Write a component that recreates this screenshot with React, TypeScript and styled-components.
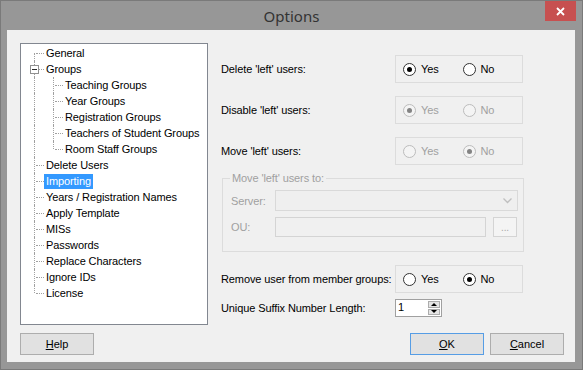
import React from "react";
import styled, { createGlobalStyle, css } from "styled-components";

const GlobalStyle = createGlobalStyle`
  html, body { margin: 0; padding: 0; background: #979797; }
  * { box-sizing: border-box; }
`;

const Window = styled.div`
  width: 583px;
  height: 370px;
  border: 1px solid #7a7a7a;
  background: #979797;
  display: flex;
  flex-direction: column;
  font-family: "Liberation Sans", Arial, sans-serif;
  font-size: 11px;
  letter-spacing: -0.1px;
  color: #000;
`;

const TitleBar = styled.div`
  height: 29px;
  flex: none;
  display: grid;
  grid-template-columns: 1fr auto 1fr;
`;

const TitleText = styled.div`
  grid-column: 2;
  align-self: center;
  font-family: "Noto Sans", "Open Sans", sans-serif;
  font-size: 15px;
  letter-spacing: 0;
  color: #333;
  padding-top: 1px;
`;

const CloseButton = styled.div`
  grid-column: 3;
  justify-self: end;
  align-self: start;
  width: 31px;
  height: 20px;
  margin-right: 6px;
  background: #c75050;
  display: flex;
  align-items: center;
  justify-content: center;
`;

const Client = styled.div`
  flex: 1;
  margin: 0 7px 7px 6px;
  background: #f0f0f0;
  display: flex;
  flex-direction: column;
  padding: 13px 11px 0 13px;
`;

const Main = styled.div`
  display: flex;
  gap: 13px;
`;

const Tree = styled.div`
  width: 188px;
  height: 282px;
  flex: none;
  border: 1px solid #828790;
  background: #fff;
  padding-top: 1px;
`;

const TreeRow = styled.div`
  height: 16px;
  display: flex;
  align-items: center;
`;

const lineColor = "#a0a0a0";

const Indent = styled.span`
  position: relative;
  width: 19px;
  height: 16px;
  flex: none;
  &::before {
    content: "";
    position: absolute;
    left: 13px;
    top: 0;
    bottom: 0;
    border-left: 1px dotted ${lineColor};
  }
`;

const Elbow = styled.span<{ $top: boolean; $bottom: boolean }>`
  position: relative;
  width: 23px;
  height: 16px;
  flex: none;
  &::before {
    content: "";
    position: absolute;
    left: 13px;
    top: ${(p) => (p.$top ? 0 : 8)}px;
    bottom: ${(p) => (p.$bottom ? 0 : 8)}px;
    border-left: 1px dotted ${lineColor};
  }
  &::after {
    content: "";
    position: absolute;
    left: 15px;
    top: 8px;
    width: 8px;
    border-top: 1px dotted ${lineColor};
  }
`;

const MinusBox = styled.span`
  position: absolute;
  left: 9px;
  top: 4px;
  width: 9px;
  height: 9px;
  border: 1px solid #919191;
  background: #fff;
  z-index: 1;
  &::after {
    content: "";
    position: absolute;
    left: 1px;
    top: 3px;
    width: 5px;
    height: 1px;
    background: #2b2b2b;
  }
`;

const TreeLabel = styled.span<{ $selected?: boolean }>`
  padding: 0 2px;
  height: 15px;
  line-height: 15px;
  white-space: nowrap;
  ${(p) =>
    p.$selected &&
    css`
      background: #3399ff;
      color: #fff;
    `}
`;

const Panel = styled.div`
  display: flex;
  flex-direction: column;
  padding-top: 12px;
`;

const FieldRow = styled.div<{ $gap: number }>`
  display: grid;
  grid-template-columns: 174px 128px;
  align-items: center;
  margin-top: ${(p) => p.$gap}px;
`;

const RadioBox = styled.div`
  height: 28px;
  border: 1px solid #dcdcdc;
  display: flex;
  align-items: center;
  padding-left: 7px;
`;

const RadioOption = styled.label<{ $disabled?: boolean }>`
  width: 60px;
  display: flex;
  align-items: center;
  gap: 5px;
  color: ${(p) => (p.$disabled ? "#a0a0a0" : "#000")};
`;

const RadioCircle = styled.span<{ $checked?: boolean; $disabled?: boolean }>`
  width: 13px;
  height: 13px;
  border-radius: 50%;
  border: 1px solid ${(p) => (p.$disabled ? "#bcbcbc" : "#333")};
  background: ${(p) => (p.$disabled ? "#f4f4f4" : "#fff")};
  display: flex;
  align-items: center;
  justify-content: center;
  flex: none;
  &::after {
    content: "";
    width: 5px;
    height: 5px;
    border-radius: 50%;
    background: ${(p) => (p.$disabled ? "#838383" : "#000")};
    display: ${(p) => (p.$checked ? "block" : "none")};
  }
`;

const GroupBox = styled.fieldset`
  margin: 7px 0 0 1px;
  width: 302px;
  border: 1px solid #dcdcdc;
  padding: 5px 5px 14px 8px;
  display: grid;
  grid-template-columns: 44px 1fr;
  row-gap: 6px;
  align-items: center;
  color: #a0a0a0;
`;

const GroupLegend = styled.legend`
  margin-left: -1px;
  padding: 0 2px;
  line-height: 13px;
  color: #a0a0a0;
`;

const ComboBox = styled.div`
  height: 21px;
  border: 1px solid #d9d9d9;
  background: #efefef;
  display: flex;
  align-items: center;
  justify-content: flex-end;
  padding-right: 5px;
`;

const OuLine = styled.div`
  display: flex;
  gap: 7px;
  padding-right: 1px;
`;

const TextBox = styled.div`
  height: 20px;
  flex: 1;
  border: 1px solid #d4d4d4;
  background: #f0f0f0;
`;

const BrowseButton = styled.div`
  width: 24px;
  height: 20px;
  border: 1px solid #d4d4d4;
  background: #f4f4f4;
  color: #a8a8a8;
  display: flex;
  align-items: flex-end;
  justify-content: center;
  padding-bottom: 3px;
  font-size: 10px;
`;

const Spinner = styled.div`
  width: 47px;
  height: 18px;
  border: 1px solid #a0a0a0;
  background: #fff;
  display: flex;
`;

const SpinValue = styled.div`
  flex: 1;
  padding-left: 2px;
  line-height: 15px;
`;

const SpinButtons = styled.div`
  width: 13px;
  display: flex;
  flex-direction: column;
  gap: 1px;
  padding: 1px 1px 1px 0;
`;

const SpinHalf = styled.div<{ $down?: boolean }>`
  flex: 1;
  background: #e5e5e5;
  border: 1px solid #acacac;
  display: flex;
  align-items: center;
  justify-content: center;
  &::after {
    content: "";
    border-left: 3px solid transparent;
    border-right: 3px solid transparent;
    ${(p) =>
      p.$down
        ? css`border-top: 3px solid #000;`
        : css`border-bottom: 3px solid #000;`}
  }
`;

const Footer = styled.div`
  display: flex;
  margin-top: 8px;
  gap: 6px;
`;

const Spacer = styled.div`
  flex: 1;
`;

const Button = styled.button<{ $default?: boolean }>`
  width: 74px;
  height: 22px;
  border: 1px solid ${(p) => (p.$default ? "#569de5" : "#adadad")};
  background: #e1e1e1;
  font-family: "Liberation Sans", Arial, sans-serif;
  font-size: 11px;
  color: #000;
  padding: 0;
  u { text-decoration: underline; }
`;

type TreeItem = {
  label: string;
  level: number;
  top: boolean;
  bottom: boolean;
  box?: boolean;
  selected?: boolean;
};

const tree: TreeItem[] = [
  { label: "General", level: 0, top: false, bottom: true },
  { label: "Groups", level: 0, top: true, bottom: true, box: true },
  { label: "Teaching Groups", level: 1, top: true, bottom: true },
  { label: "Year Groups", level: 1, top: true, bottom: true },
  { label: "Registration Groups", level: 1, top: true, bottom: true },
  { label: "Teachers of Student Groups", level: 1, top: true, bottom: true },
  { label: "Room Staff Groups", level: 1, top: true, bottom: false },
  { label: "Delete Users", level: 0, top: true, bottom: true },
  { label: "Importing", level: 0, top: true, bottom: true, selected: true },
  { label: "Years / Registration Names", level: 0, top: true, bottom: true },
  { label: "Apply Template", level: 0, top: true, bottom: true },
  { label: "MISs", level: 0, top: true, bottom: true },
  { label: "Passwords", level: 0, top: true, bottom: true },
  { label: "Replace Characters", level: 0, top: true, bottom: true },
  { label: "Ignore IDs", level: 0, top: true, bottom: true },
  { label: "License", level: 0, top: true, bottom: false },
];

const YesNo = ({ value, disabled }: { value: "yes" | "no"; disabled?: boolean }) => (
  <RadioBox>
    <RadioOption $disabled={disabled}>
      <RadioCircle $checked={value === "yes"} $disabled={disabled} />
      Yes
    </RadioOption>
    <RadioOption $disabled={disabled}>
      <RadioCircle $checked={value === "no"} $disabled={disabled} />
      No
    </RadioOption>
  </RadioBox>
);

export default function App() {
  return (
    <>
      <GlobalStyle />
      <Window>
        <TitleBar>
          <TitleText>Options</TitleText>
          <CloseButton>
            <svg width="9" height="9" viewBox="0 0 9 9">
              <path d="M1 1 L8 8 M8 1 L1 8" stroke="#fff" strokeWidth="1.8" />
            </svg>
          </CloseButton>
        </TitleBar>
        <Client>
          <Main>
            <Tree>
              {tree.map((item) => (
                <TreeRow key={item.label}>
                  {item.level > 0 && <Indent />}
                  <Elbow $top={item.top} $bottom={item.bottom}>
                    {item.box && <MinusBox />}
                  </Elbow>
                  <TreeLabel $selected={item.selected}>{item.label}</TreeLabel>
                </TreeRow>
              ))}
            </Tree>
            <Panel>
              <FieldRow $gap={0}>
                <span>Delete 'left' users:</span>
                <YesNo value="yes" />
              </FieldRow>
              <FieldRow $gap={13}>
                <span>Disable 'left' users:</span>
                <YesNo value="yes" disabled />
              </FieldRow>
              <FieldRow $gap={13}>
                <span>Move 'left' users:</span>
                <YesNo value="no" disabled />
              </FieldRow>
              <GroupBox>
                <GroupLegend>Move 'left' users to:</GroupLegend>
                <span>Server:</span>
                <ComboBox>
                  <svg width="9" height="6" viewBox="0 0 9 6">
                    <path d="M0.5 0.5 L4.5 4.5 L8.5 0.5" fill="none" stroke="#bfbfbf" strokeWidth="1.3" />
                  </svg>
                </ComboBox>
                <span>OU:</span>
                <OuLine>
                  <TextBox />
                  <BrowseButton>...</BrowseButton>
                </OuLine>
              </GroupBox>
              <FieldRow $gap={13}>
                <span>Remove user from member groups:</span>
                <YesNo value="no" />
              </FieldRow>
              <FieldRow $gap={6}>
                <span>Unique Suffix Number Length:</span>
                <Spinner>
                  <SpinValue>1</SpinValue>
                  <SpinButtons>
                    <SpinHalf />
                    <SpinHalf $down />
                  </SpinButtons>
                </Spinner>
              </FieldRow>
            </Panel>
          </Main>
          <Footer>
            <Button>
              <u>H</u>elp
            </Button>
            <Spacer />
            <Button $default>
              <u>O</u>K
            </Button>
            <Button>
              <u>C</u>ancel
            </Button>
          </Footer>
        </Client>
      </Window>
    </>
  );
}
